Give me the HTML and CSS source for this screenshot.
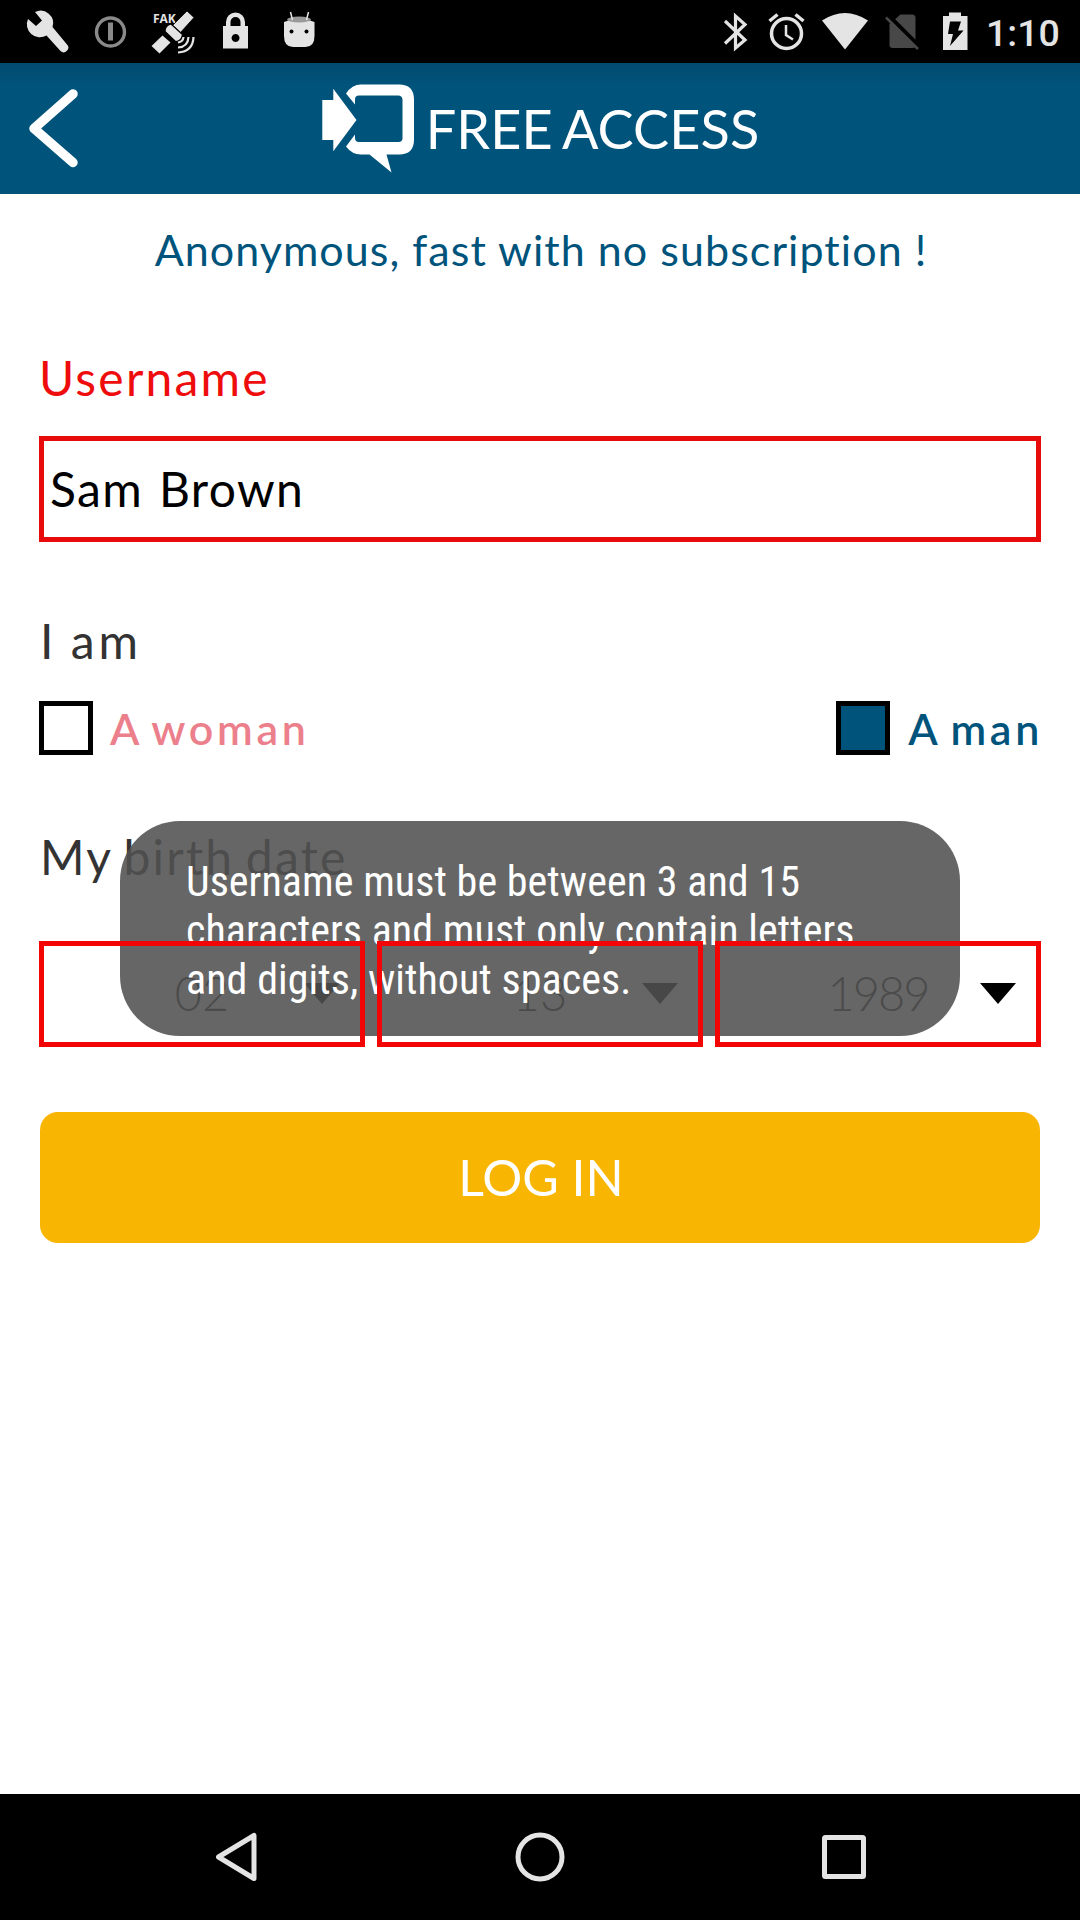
FILE: index.html
```html
<!DOCTYPE html>
<html lang="en">
<head>
<meta charset="utf-8">
<title>Free Access</title>
<link rel="stylesheet" href="styles.css">
</head>
<body>
<div class="screen">
  <div class="status-bar">
    <svg class="status-icons" width="330" height="63" viewBox="0 0 330 63" fill="#e4e4e4">
      <path d="M35 12a12.500 12.500 0 0 1 17.500 15L67 44.500a4.600 4.600 0 0 1-6.500 6.500L46.500 35.500A13 13 0 0 1 28 19l8 7 6-5.500z"/>
      <g stroke="#8a8a8a" fill="none"><circle cx="110.500" cy="32" r="14" stroke-width="3.400"/><path d="M110.500 22.500v18" stroke-width="5"/></g>
      <text x="153" y="23" class="fake-label">FAK</text>
      <path d="M187 11l7 6.500-13.500 15-8-7z" stroke="#000" stroke-width=".8"/>
      <path d="M171 24l11.500 10.500q-1 7-7 7L165 31.500q0-6 6-7.500z" stroke="#000" stroke-width="1.200"/>
      <path d="M162.500 35.500l8 7-11 11-8-7.500z"/>
      <g fill="none" stroke="#e4e4e4" stroke-width="2.200"><path d="M178 42.500q5-.5 5.500-5.500M178 47.500q10-.5 10.500-10.500M178 52.500q15-1 15.500-15.500"/></g>
      <path fill-rule="evenodd" d="M223 26h3v-4a9.500 9.500 0 0 1 19 0v4h3v22.500h-25zM230.500 26h10v-4a5 5 0 0 0-10 0zM235.500 34a4 4 0 1 0 .1 0z"/>
      <path d="M284 22q15.500-7 30.500 0v14q0 11-9 11h-12.500q-9 0-9-11z"/>
      <ellipse cx="299" cy="19.500" rx="12" ry="3" fill="#999"/>
      <path d="M290.500 12l2 8M308.500 12l-2 8" stroke="#e4e4e4" stroke-width="1.500"/>
      <circle cx="291.500" cy="31.500" r="2" fill="#000"/><circle cx="306.500" cy="31.500" r="2" fill="#000"/>
    </svg>
    <div class="status-right">
      <svg width="260" height="63" viewBox="720 0 260 63" fill="#e4e4e4">
        <path d="M725 21l20 19-9.500 8V16l9.500 8.500-20 19" fill="none" stroke="#e4e4e4" stroke-width="3.200"/>
        <g fill="none" stroke="#e4e4e4"><circle cx="786.500" cy="33.500" r="15" stroke-width="3.500"/><path d="M786 25v10l7 4.500" stroke-width="2.500"/><path d="M769.500 21l8-6.500M795.500 14.500l8 6.500" stroke-width="3.500"/></g>
        <path d="M822 20.500q23-15 46 0L845 49.500z"/>
        <path fill="#484848" d="M900.500 14.500H912q3.500 0 3.500 3.500v27.500q0 2.500-3 2.500h-20q-3 0-3-3V24z"/>
        <path d="M887.500 14.500l31 31" stroke="#000" stroke-width="4"/>
        <path d="M886 17.500l32 31.500" stroke="#484848" stroke-width="2.500"/>
        <path fill-rule="evenodd" d="M943 16h6v-3.500h12V16h6.500v34H943zM950 21.500h11l-3 9h5.500l-13.500 15.500 3-12h-5z"/>
      </svg>
      <span class="clock">1:10</span>
    </div>
  </div>

  <header class="app-header">
    <svg class="back" width="60" height="84" viewBox="24 86 60 84"><path d="M73 94L34 128.500l39 34" fill="none" stroke="#fff" stroke-width="9.500" stroke-linejoin="round" stroke-linecap="round"/></svg>
    <svg class="logo" width="94" height="90" viewBox="320 83 94 90" fill="#fff">
      <path d="M321.300 100h11V88.800L355.500 120l-23.200 31.200V140h-11z"/>
      <path d="M345 93.500q6-9 15-9h38q15 0 15 15v40q0 15-15 15h-12.500l5 18-22-18H360q-9 0-15-8l9-12v3.500q0 4 4 4h39.500q4 0 4-4V100q0-4.500-4.500-4.500h-39q-4 0-4 4v5z"/>
    </svg>
    <h1 class="title">FREE ACCESS</h1>
  </header>

  <main class="form">
    <p class="tagline">Anonymous, fast with no subscription !</p>
    <label class="label label-error">Username</label>
    <div class="field"><span>Sam Brown</span></div>
    <div class="label label-gender">I am</div>
    <div class="choices">
      <div class="choice choice-woman"><span class="box"></span><span>A woman</span></div>
      <div class="choice choice-man"><span class="box"></span><span>A man</span></div>
    </div>
    <div class="label label-birth">My birth date</div>
    <div class="dates">
      <div class="select"><span>02</span><svg class="arrow" viewBox="0 0 36 21"><path d="M0 0h36L18 21z"/></svg></div>
      <div class="select"><span>13</span><svg class="arrow" viewBox="0 0 36 21"><path d="M0 0h36L18 21z"/></svg></div>
      <div class="select select-year"><span>1989</span><svg class="arrow" viewBox="0 0 36 21"><path d="M0 0h36L18 21z"/></svg></div>
    </div>
    <button class="login">LOG IN</button>
  </main>

  <div class="toast">Username must be between 3 and 15<br>characters and must only contain letters<br>and digits, without spaces.</div>

  <nav class="nav-bar">
    <svg width="44" height="52" viewBox="0 0 44 52"><path d="M40 4.500v43L4.500 26z"/></svg>
    <svg width="52" height="52" viewBox="0 0 52 52"><circle cx="26" cy="26" r="22"/></svg>
    <svg width="44" height="52" viewBox="0 0 44 52"><rect x="2.500" y="6.500" width="39" height="39" rx="1"/></svg>
  </nav>
</div>
</body>
</html>
```
FILE: styles.css
```css
* { box-sizing: border-box; }
body { margin: 0; background: #fff; font-family: "Century Gothic", Lato, sans-serif; }
.screen { position: relative; display: flex; flex-direction: column; width: 1080px; height: 1920px; overflow: hidden; }

.status-bar { display: flex; justify-content: space-between; height: 63px; background: #000; }
.status-right { display: flex; padding-right: 22px; }
.fake-label { font: bold 12px "Open Sans", sans-serif; }
.clock { width: 72px; margin-left: 6px; font: 500 37.500px/66px Roboto, sans-serif; color: #e4e4e4; }

.app-header { position: relative; display: flex; align-items: center; justify-content: center; height: 131px; background: linear-gradient(#034a6f, #00547c 24px); }
.back { position: absolute; left: 24px; top: 23px; }
.logo { margin: 0 11px 2px 0; }
.title { margin: 0; font-size: 54px; line-height: 54px; font-weight: 400; color: #fff; letter-spacing: .1px; word-spacing: -3px; }

.form { flex: 1; display: flex; flex-direction: column; padding: 26px 39px 0; }
.tagline { margin: 0; font-size: 43px; line-height: 60px; letter-spacing: 1.050px; word-spacing: 0; padding-left: 2px; text-align: center; color: #00547c; }
.label { font-size: 48px; line-height: 60px; color: #333; }
.label-error { margin-top: 68px; letter-spacing: 2.200px; color: #ee0c0c; }
.field { display: flex; align-items: center; height: 106px; margin-top: 28px; padding: 0 6px 2px; border: 5px solid #e80b0b; font-size: 48px; letter-spacing: 1.400px; word-spacing: 2px; color: #000; }
.label-gender { margin-top: 69px; letter-spacing: 4px; word-spacing: -3px; padding-left: 1px; }
.choices { display: flex; justify-content: space-between; height: 54px; margin-top: 30px; }
.choice { display: flex; align-items: center; gap: 17px; font-size: 43px; font-weight: 600; letter-spacing: 3.700px; word-spacing: -4px; }
.choice-woman { color: #ec7f8c; }
.choice-man { gap: 18px; margin-right: -2px; color: #00547c; }
.box { width: 54px; height: 54px; border: 5px solid #000; }
.choice-man .box { background: #00547c; }
.label-birth { margin-top: 72px; padding-left: 1px; letter-spacing: 2.200px; word-spacing: -3px; }
.dates { display: grid; grid-template-columns: repeat(3, 1fr); gap: 12px; height: 106px; margin-top: 54px; }
.select { position: relative; display: flex; align-items: center; justify-content: center; padding-bottom: 2px; font-size: 47px; font-weight: 300; color: #222; }
.select-year { letter-spacing: -2px; }
/* the error outline stays above the toast */
.select::after { content: ""; position: absolute; inset: 0; z-index: 2; border: 5px solid #f40505; }
.arrow { position: absolute; right: 25px; top: 42px; width: 36px; height: 21px; fill: #000; }
.login { height: 131px; margin: 65px 1px 0; padding: 0 0 1px 2px; border: 0; border-radius: 18px; background: #f8b502; font: 400 50px/50px "Century Gothic", Lato, sans-serif; color: #fff; }

.toast { position: absolute; z-index: 1; left: 120px; top: 821px; width: 840px; height: 215px; padding: 36px 66px; border-radius: 60px; background: rgba(81, 81, 81, .88); font: 400 42px/49.200px "Roboto Condensed", Roboto, sans-serif; letter-spacing: .06px; white-space: nowrap; color: #fff; }

.nav-bar { display: flex; align-items: center; justify-content: space-between; height: 126px; padding: 0 214px; background: #000; }
.nav-bar svg { fill: none; stroke: #e4e4e4; stroke-width: 5; stroke-linejoin: round; }
```
